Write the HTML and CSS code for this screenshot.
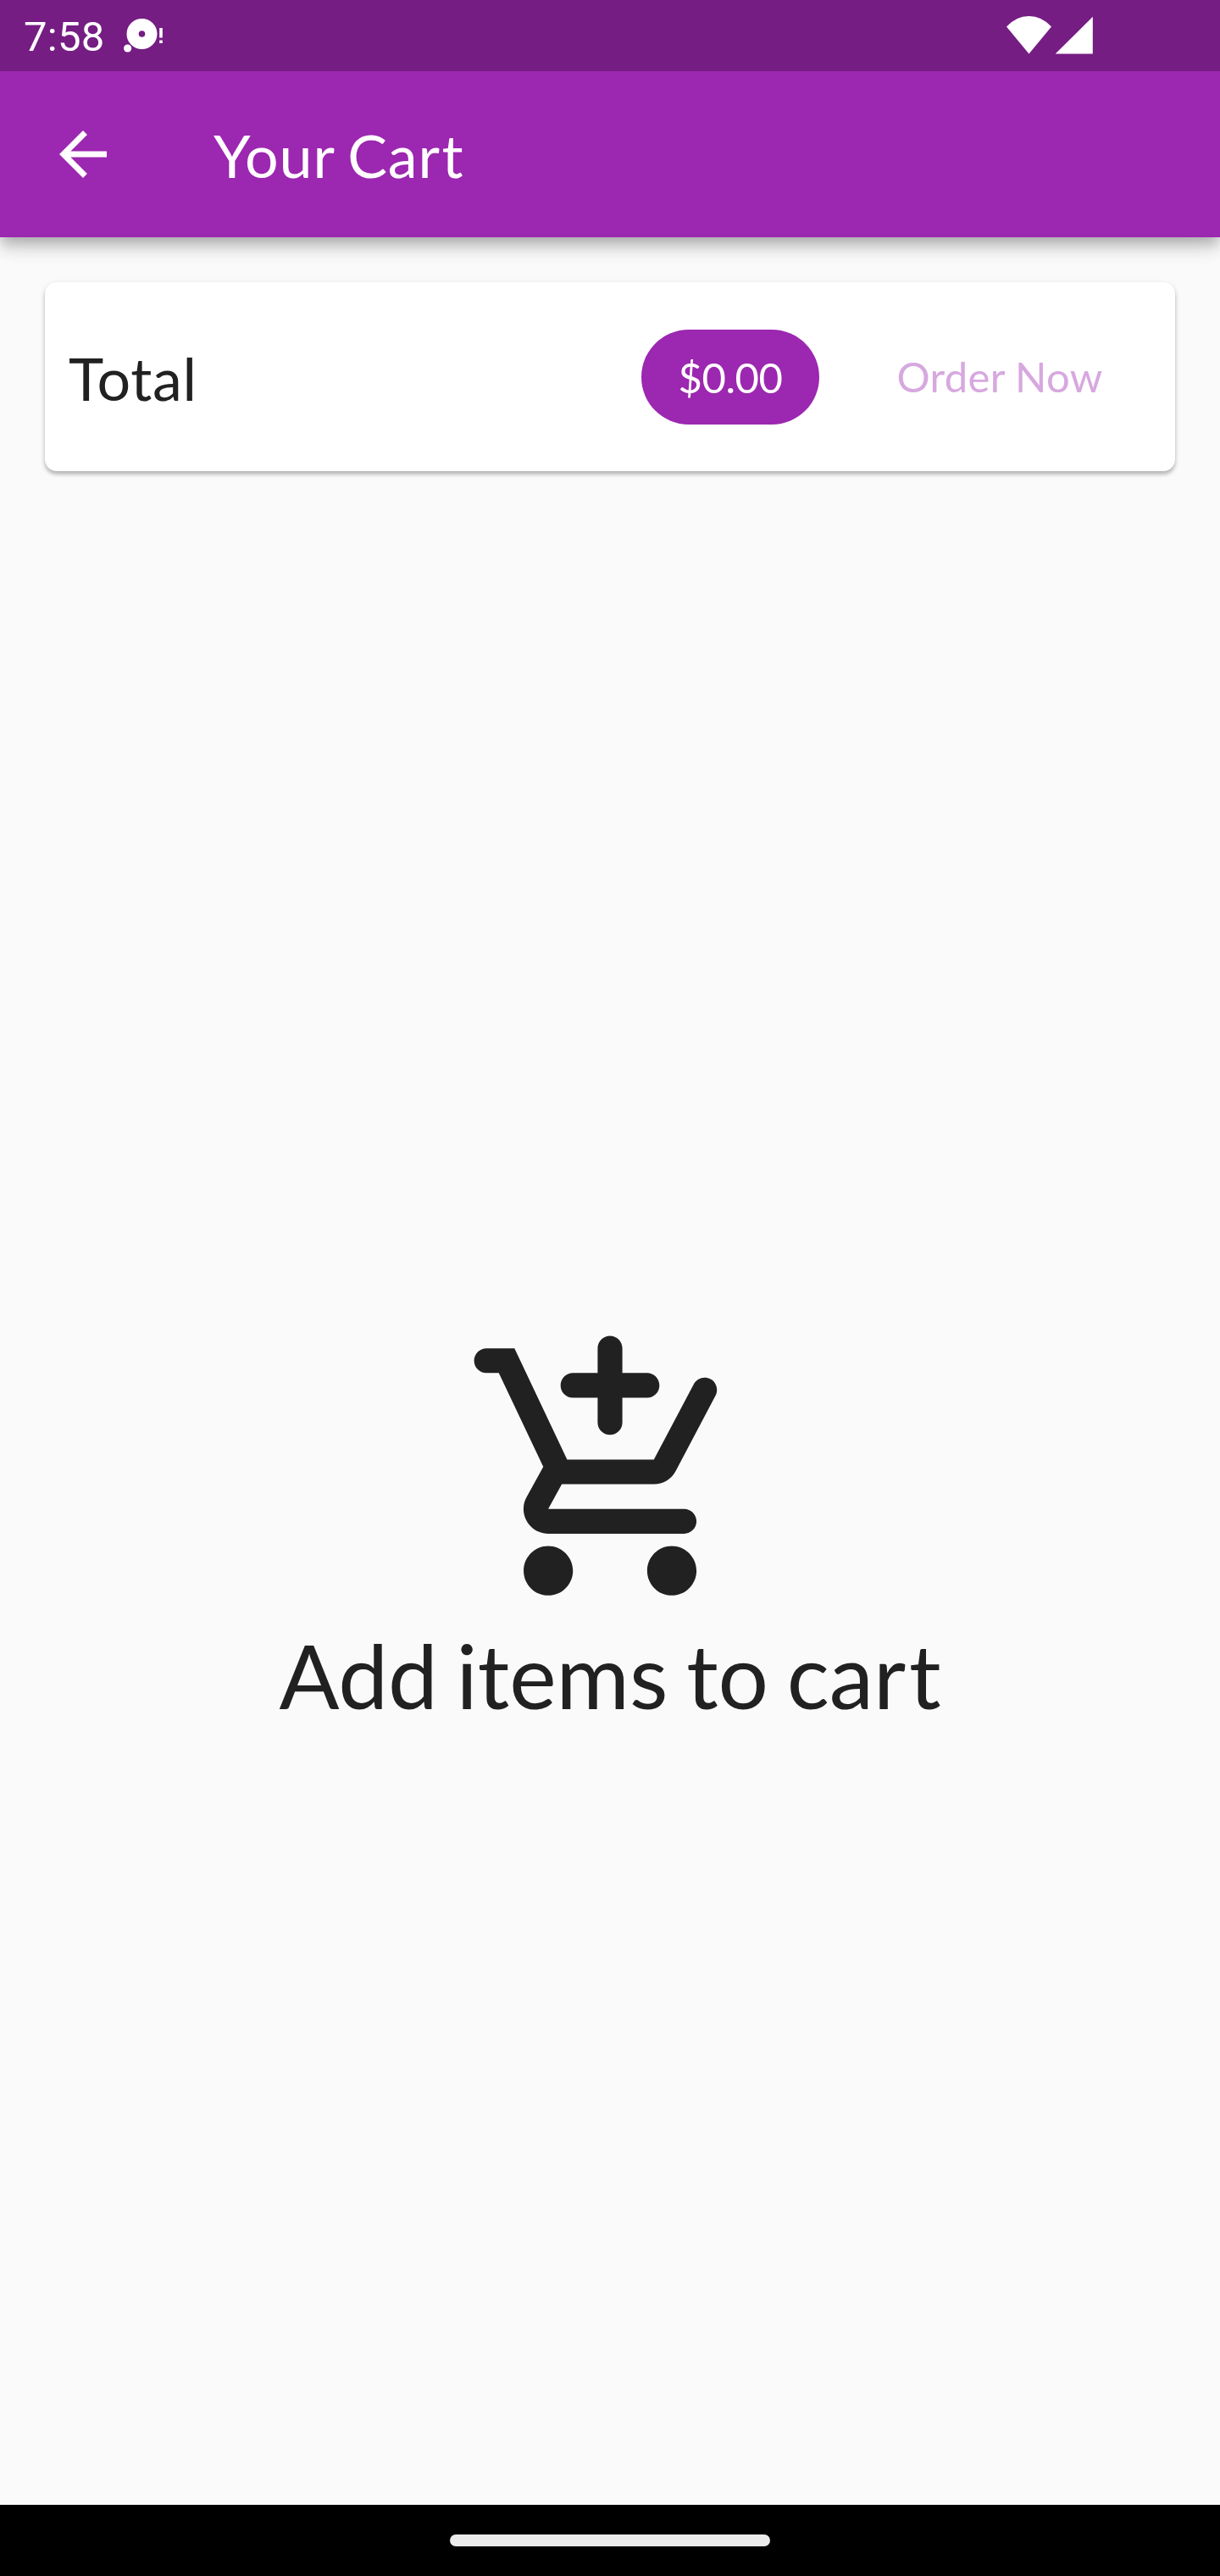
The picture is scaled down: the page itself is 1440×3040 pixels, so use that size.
FILE: index.html
```html
<!DOCTYPE html>
<html lang="en">
<head>
<meta charset="utf-8">
<title>Your Cart</title>
<link rel="stylesheet" href="styles.css">
</head>
<body>
<div class="screen">
  <div class="status-bar">
    <span class="clock">7:58</span>
    <svg class="notice-icon" viewBox="0 0 48 40"><path fill-rule="evenodd" d="M21.5 0a18 18 0 1 1 0 36a18 18 0 1 1 0-36zM21.5 14.2a3.8 3.8 0 1 0 0 7.6a3.8 3.8 0 1 0 0-7.6z"/><circle cx="4.6" cy="35" r="4.6"/><path d="M42.2 11h3.6v11.5h-3.6zM42.2 25.5h3.6V29h-3.6z"/></svg>
    <svg class="signal-icons" viewBox="0 0 102 46"><path d="M0 12.5Q11.5 0 26.5 0T53 12.5L26.5 44.5z"/><path d="M101.8.8v43.7H57.7z"/></svg>
  </div>
  <header class="app-bar">
    <svg class="back-icon" viewBox="0 0 24 24"><path d="M20 11H7.83l5.59-5.59L12 4l-8 8 8 8 1.41-1.41L7.83 13H20v-2z"/></svg>
    <h1 class="title">Your Ca<span class="loose">r</span>t</h1>
  </header>
  <main class="content">
    <section class="total-card">
      <span class="total-label">Total</span>
      <span class="amount">$0.00</span>
      <button class="order" disabled>Order Now</button>
    </section>
    <section class="empty">
      <svg class="cart-icon" viewBox="0 0 24 24"><path d="M12 9c.55 0 1-.45 1-1V6h2c.55 0 1-.45 1-1s-.45-1-1-1h-2V2c0-.55-.45-1-1-1s-1 .45-1 1v2H9c-.55 0-1 .45-1 1s.45 1 1 1h2v2c0 .55.45 1 1 1zm-5 9c-1.1 0-1.99.9-1.99 2S5.9 22 7 22s2-.9 2-2-.9-2-2-2zm10 0c-1.1 0-1.99.9-1.99 2s.89 2 1.99 2 2-.9 2-2-.9-2-2-2zm-8.9-5h7.45c.75 0 1.41-.41 1.75-1.03l3.24-6.14c.25-.48.08-1.08-.4-1.34-.49-.27-1.1-.08-1.36.41L15.55 11H8.53L4.27 2H2c-.55 0-1 .45-1 1s.45 1 1 1h1l3.6 7.59-1.35 2.45c-.16.28-.25.61-.25.96 0 1.1.9 2 2 2h11c.55 0 1-.45 1-1s-.45-1-1-1H7l1.1-2z"/></svg>
      <p class="empty-text">Add items to ca<span class="loose">r</span>t</p>
    </section>
  </main>
  <div class="nav-bar"><div class="handle"></div></div>
</div>
</body>
</html>
```

FILE: styles.css
```css
* {
  box-sizing: border-box;
}

body {
  margin: 0;
  font-family: Lato, sans-serif;
  color: #212121;
}

svg {
  display: block;
  fill: currentColor;
  flex: none;
}

.screen {
  display: flex;
  flex-direction: column;
  width: 1440px;
  height: 3040px;
  background: #fafafa;
}

.status-bar {
  display: flex;
  align-items: flex-start;
  height: 84px;
  padding-left: 28px;
  color: #fff;
  background: #751d83;
  z-index: 2;
}

.clock {
  width: 118px;
  padding-top: 15px;
  font: 49px/58px Roboto, sans-serif;
  letter-spacing: .3px;
}

.notice-icon {
  width: 48px;
  height: 40px;
  margin-top: 22px;
}

.signal-icons {
  width: 102px;
  height: 46px;
  margin: 19px 150px 0 auto;
}

.app-bar {
  display: flex;
  align-items: center;
  height: 196px;
  padding-left: 56px;
  color: #fff;
  background: #9c27b0;
  box-shadow: 0 7px 14px -3px rgba(0, 0, 0, .2), 0 14px 17px rgba(0, 0, 0, .14), 0 3px 35px rgba(0, 0, 0, .06);
  z-index: 1;
}

.back-icon {
  width: 84px;
  height: 84px;
}

.title {
  margin: 0 0 0 112px;
  padding-top: 2px;
  font-size: 70px;
  font-weight: 400;
  line-height: 84px;
  letter-spacing: .9px;
  word-spacing: -3px;
}

.loose {
  letter-spacing: .035em;
}

.content {
  flex: 1;
  display: flex;
  flex-direction: column;
}

.total-card {
  display: flex;
  align-items: center;
  height: 223px;
  margin: 53px 53px 0;
  padding: 0 28px;
  border-radius: 14px;
  background: #fff;
  box-shadow: 0 4px 4px rgba(0, 0, 0, .2), 0 2px 7px rgba(0, 0, 0, .12);
}

.total-label {
  padding-top: 2px;
  font-size: 70px;
  line-height: 84px;
  letter-spacing: .7px;
}

.amount {
  width: 210px;
  height: 112px;
  margin-left: auto;
  border-radius: 56px;
  font-size: 49px;
  line-height: 112px;
  letter-spacing: -.4px;
  text-align: center;
  color: #fff;
  background: #9c27b0;
}

.order {
  width: 308px;
  height: 126px;
  margin: 0 25px 0 59px;
  padding: 0;
  border: 0;
  font: 49px/59px Lato, sans-serif;
  letter-spacing: .35px;
  word-spacing: -1px;
  color: #d7a8df;
  background: none;
}

.empty {
  flex: 1;
  display: flex;
  flex-direction: column;
  align-items: center;
  padding-top: 1006px;
}

.cart-icon {
  width: 350px;
  height: 350px;
}

.empty-text {
  margin: 1px 0 0;
  font-size: 105px;
  line-height: 126px;
  word-spacing: -5.2px;
}

.nav-bar {
  display: flex;
  align-items: center;
  justify-content: center;
  height: 84px;
  background: #000;
}

.handle {
  width: 378px;
  height: 14px;
  border-radius: 7px;
  background: #ebebeb;
}
```
